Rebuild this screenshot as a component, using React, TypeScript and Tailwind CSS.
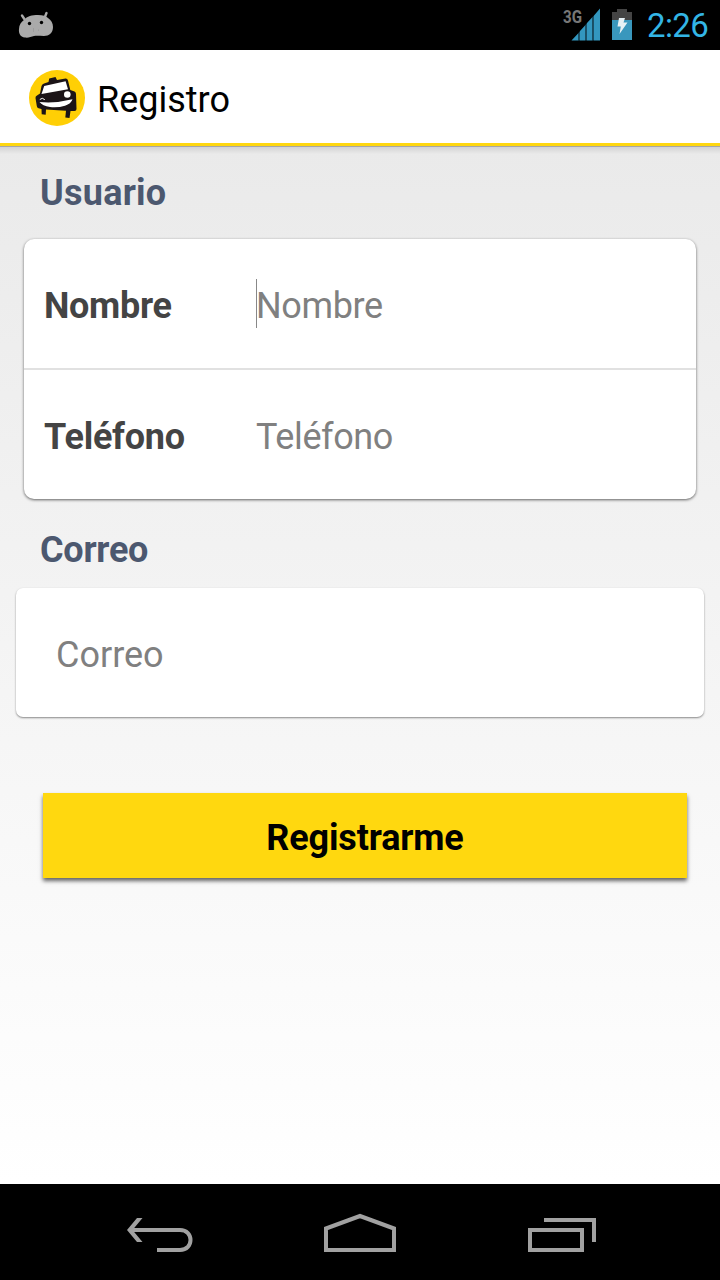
import React from "react";

function StatusBar() {
  return (
    <div className="flex h-[50px] shrink-0 items-start bg-black">
      <svg className="ml-[18px] mt-[10px] h-[30px] w-9" viewBox="18 10 36 30">
        <g fill="#aaaaaa">
          <path d="M24 20C27 16 32 15 38 15C43 15 46 16 48 18C51 20 53 23 53 27C53 33 49 36 44 36C40 36 37 35.500 34 36C31 37 28 38 25 37.500C20 37 18.500 33 19 29C19 25 21 22 24 20Z" />
          <path d="M22 15.500L25 20M46.500 13L44.500 18" stroke="#aaaaaa" strokeWidth="2.400" strokeLinecap="round" />
        </g>
        <circle cx="29.500" cy="23.500" r="1.700" fill="#000" />
        <circle cx="41.500" cy="22.500" r="1.700" fill="#000" />
        <path d="M33.500 28V32M38.500 29.500V31" stroke="#979797" strokeWidth=".7" />
      </svg>
      <svg className="ml-auto mt-[7px] h-9 w-10" viewBox="562 7 40 36">
        <text x="563" y="22.700" textLength="19" lengthAdjust="spacingAndGlyphs" fill="#777" fontFamily="Roboto, sans-serif" fontSize="17.500" fontWeight="700">3G</text>
        <path d="M571.500 40.500L578.500 33V40.500ZM580 40.500V31L585 25.500V40.500ZM587 40.500V23L592.500 17V40.500ZM594 40.500V15.500L600 8.500V40.500Z" fill="#3397bf" />
        <path d="M578.500 33L580 31V40.500H578.500ZM585 25.500L587 23V40.500H585ZM592.500 17L594 15.500V40.500H592.500Z" fill="#1b5167" />
      </svg>
      <svg className="ml-[10px] mt-[8px] h-8 w-5" viewBox="612 8 20 32">
        <path d="M612 12H617V9H627V12H632V40H612Z" fill="#444" />
        <path d="M612 20H632V40H612Z" fill="#3997bd" />
        <path d="M619 18H625L623.500 22.500H627.500L619.500 34L620.800 26.500H617.500Z" fill="#e6f1f5" />
      </svg>
      <div className="ml-[15px] mt-[8px] w-[73px] whitespace-nowrap text-[33px] leading-[36px] tracking-[-0.600px] text-[#33b5e5]">2:26</div>
    </div>
  );
}

function TaxiLogo() {
  return (
    <svg className="ml-7 h-[58px] w-[58px]" viewBox="28 69 58 58">
      <circle cx="57" cy="98" r="28" fill="#ffcf05" />
      <path d="M48.500 82L49.200 78.500L55.500 77L57 80L65.500 78.600Q67.500 78.500 68 80.500L70.300 90L74.500 91.500Q76 92 76 94L76.500 109Q76.500 111 74.500 111L70.500 111L69.500 118L65.300 117.500L66 110.700L46 109.500L45.700 114.800L41.700 114.300L41.500 109L38.500 108.300Q37 108 36.800 106L35.500 98Q35.300 96 37 95.500L40 93.500L41.500 86Q42 84 44 83.500Z" fill="#1b1417" />
      <path d="M44.200 86L65.600 81.300L68 89.200L41.500 94Z" fill="#fff" />
      <path d="M39.500 102Q56 103.500 72.500 99.300Q71 104 65 105.700Q58 107.800 50 107Q42.500 106 39.500 102Z" fill="#fff" />
      <circle cx="67.300" cy="94.500" r="3.300" fill="#fff" />
      <path d="M39.800 99.500Q42.300 97 44.800 99.700" fill="none" stroke="#fff" strokeWidth="1" />
    </svg>
  );
}

function FormRow({
  label,
  focused,
  labelClass,
  hintClass,
}: {
  label: string;
  focused?: boolean;
  labelClass: string;
  hintClass: string;
}) {
  return (
    <label className="flex flex-1 items-center pl-5 pt-[5px]">
      <span className={`w-[212px] font-bold text-[#444] ${labelClass}`}>{label}</span>
      <span className={`relative text-[#808080] ${hintClass}`}>
        {focused && <span className="absolute left-0 top-[-6px] h-[49px] w-px bg-[#888]" />}
        {label}
      </span>
    </label>
  );
}

function NavigationBar() {
  return (
    <div className="flex h-24 shrink-0 items-center bg-black">
      <svg className="ml-[124px] h-12 w-[72px]" viewBox="124 1208 72 48" fill="none" stroke="#a1a1a1" strokeWidth="4">
        <path d="M129 1230H180C194 1230 194 1250 180 1250H157" />
        <path d="M137 1218H142.500L132.500 1230L142.500 1242H137L127 1230Z" fill="#a1a1a1" stroke="none" />
      </svg>
      <svg className="ml-[126px] h-12 w-[76px]" viewBox="322 1208 76 48" fill="none" stroke="#a1a1a1" strokeWidth="4">
        <path d="M326 1250V1228.500L360 1216L394 1228.500V1250Z" />
      </svg>
      <svg className="ml-[128px] h-12 w-[72px]" viewBox="526 1208 72 48" fill="none" stroke="#a1a1a1" strokeWidth="4">
        <path d="M544 1220H594V1242M530 1230H582V1250H530Z" />
      </svg>
    </div>
  );
}

export default function App() {
  return (
    <div className="flex h-[1280px] w-[720px] flex-col overflow-hidden bg-white font-['Roboto',sans-serif] text-[36px] leading-[42px]">
      <StatusBar />
      <header className="flex h-24 shrink-0 items-center border-b-[3px] border-[#ffd70f] bg-white pt-[2px] text-black">
        <TaxiLogo />
        <h1 className="ml-[11px] mt-[5px]">Registro</h1>
      </header>
      <main className="flex flex-1 flex-col bg-linear-to-b from-[#eaeaea] to-white">
        <div className="h-[8px] shrink-0 border-t border-[#a6a6a6] bg-linear-to-b from-[#d3d3d3] to-[#eaeaea]" />
        <h2 className="ml-10 mt-[18px] font-bold tracking-[0.250px] text-[#4c586f]">Usuario</h2>
        <section className="mx-6 mt-[25px] flex h-[260px] flex-col divide-y-2 divide-[#e1e1e1] rounded-[10px] bg-white shadow-[0_1px_3px_rgba(0,0,0,0.6)]">
          <FormRow label="Nombre" focused labelClass="tracking-[-0.300px]" hintClass="tracking-[-0.350px]" />
          <FormRow label="Teléfono" labelClass="tracking-[-0.250px]" hintClass="tracking-[-0.400px]" />
        </section>
        <h2 className="ml-10 mt-[30px] font-bold tracking-[-0.250px] text-[#4c586f]">Correo</h2>
        <section className="mx-4 mt-[17px] flex h-[129px] items-center rounded-[7px] bg-white pl-10 pt-[5px] text-[#808080] shadow-[0_1px_2px_rgba(0,0,0,0.45)]">
          Correo
        </section>
        <button className="ml-[43px] mt-[76px] h-[85px] w-[644px] bg-[#ffd80f] pt-[4px] font-bold tracking-[-0.150px] text-black shadow-[0_3px_4px_rgba(0,0,0,0.6)]">
          Registrarme
        </button>
      </main>
      <NavigationBar />
    </div>
  );
}
